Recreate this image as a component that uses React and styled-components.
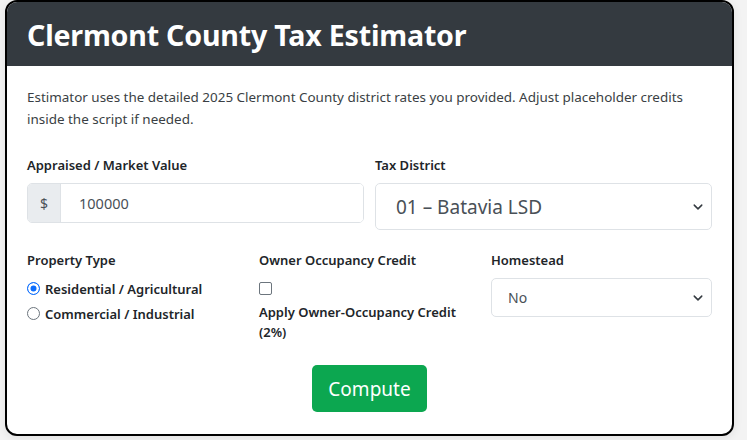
import React from "react";
import styled, { createGlobalStyle } from "styled-components";

const Global = createGlobalStyle`
  html, body { margin: 0; padding: 0; background: #f3f3f3; }
  body { font-family: "Noto Sans", "Open Sans", sans-serif; color: #212529; }
  * { box-sizing: border-box; }
`;

const Page = styled.div`
  padding: 0 12px 4px 5px;
  width: 747px;
  height: 440px;
`;

const Card = styled.div`
  width: 729px;
  border: 2px solid #000;
  border-radius: 12px;
  overflow: hidden;
  background: #fff;
  box-shadow: 0 2px 10px rgba(0, 0, 0, 0.08);
`;

const Header = styled.div`
  background: #343a40;
  height: 64px;
  display: flex;
  align-items: center;
  padding: 0 20px;
`;

const Title = styled.h1`
  margin: 0;
  color: #fff;
  font-size: 28.6px;
  font-weight: 700;
  letter-spacing: -0.2px;
`;

const Body = styled.div`
  padding: 20px 20px 22px 20px;
`;

const Intro = styled.p`
  margin: 0 0 25px;
  font-size: 13.45px;
  line-height: 22px;
  color: #3a3f44;
`;

const Row = styled.div`
  display: grid;
  grid-template-columns: repeat(${(p) => p.$cols}, 1fr);
  column-gap: 11px;
  align-items: start;
  margin-bottom: ${(p) => p.$mb || 0}px;
`;

const Field = styled.div`
  display: flex;
  flex-direction: column;
`;

const Label = styled.label`
  font-size: 13px;
  font-weight: 600;
  line-height: 21px;
  margin-bottom: ${(p) => p.$mb ?? 7}px;
  color: #212529;
`;

const InputGroup = styled.div`
  display: flex;
  height: 40px;
  border: 1px solid #dee2e6;
  border-radius: 5px;
  overflow: hidden;
`;

const Addon = styled.span`
  width: 33px;
  background: #e9ecef;
  border-right: 1px solid #dee2e6;
  display: flex;
  align-items: center;
  justify-content: center;
  font-size: 14px;
  color: #495057;
`;

const Input = styled.input`
  flex: 1;
  border: 0;
  outline: none;
  padding: 0 18px;
  font-family: inherit;
  font-size: 14.5px;
  color: #495057;
`;

const SelectBox = styled.div`
  position: relative;
  height: ${(p) => (p.$lg ? 47 : 39)}px;
  border: 1px solid #dee2e6;
  border-radius: 5px;
  display: flex;
  align-items: center;
  padding-left: ${(p) => (p.$lg ? 20 : 16)}px;
  font-size: ${(p) => (p.$lg ? 19 : 14)}px;
  color: #495057;
`;

const Chevron = styled.svg`
  position: absolute;
  right: 8px;
  top: 50%;
  margin-top: -4px;
`;

const Select = ({ lg, children }) => (
  <SelectBox $lg={lg}>
    {children}
    <Chevron width="10" height="8" viewBox="0 0 16 12">
      <path d="M2 3l6 6 6-6" fill="none" stroke="#343a40" strokeWidth="2.4" strokeLinecap="round" strokeLinejoin="round" />
    </Chevron>
  </SelectBox>
);

const OptionLine = styled.div`
  display: flex;
  align-items: center;
  gap: 5px;
  height: 25px;
  font-size: 13px;
  font-weight: 600;
`;

const Radio = styled.span`
  width: 13px;
  height: 13px;
  border-radius: 50%;
  border: 1px solid ${(p) => (p.$on ? "#0d6efd" : "#6c757d")};
  background: ${(p) => (p.$on ? "#0d6efd" : "#fff")};
  box-shadow: ${(p) => (p.$on ? "inset 0 0 0 2.5px #fff" : "none")};
  flex-shrink: 0;
`;

const CheckBox = styled.span`
  display: block;
  width: 13px;
  height: 13px;
  border: 1px solid #6c757d;
  border-radius: 2px;
  margin: 4px 0 7px;
`;

const CheckText = styled.div`
  font-size: 13px;
  font-weight: 600;
  line-height: 20px;
`;

const ButtonRow = styled.div`
  display: flex;
  justify-content: center;
  margin-top: 23px;
`;

const Button = styled.button`
  width: 115px;
  height: 47px;
  border: 0;
  border-radius: 5px;
  background: #0ca750;
  color: #fff;
  font-family: inherit;
  font-size: 19px;
`;

export default function App() {
  return (
    <Page>
      <Global />
      <Card>
        <Header>
          <Title>Clermont County Tax Estimator</Title>
        </Header>
        <Body>
          <Intro>
            Estimator uses the detailed 2025 Clermont County district rates you provided. Adjust placeholder credits
            inside the script if needed.
          </Intro>
          <Row $cols={2} $mb={20}>
            <Field>
              <Label>Appraised / Market Value</Label>
              <InputGroup>
                <Addon>$</Addon>
                <Input defaultValue="100000" />
              </InputGroup>
            </Field>
            <Field>
              <Label>Tax District</Label>
              <Select lg>01 – Batavia LSD</Select>
            </Field>
          </Row>
          <Row $cols={3}>
            <Field>
              <Label $mb={5}>Property Type</Label>
              <OptionLine>
                <Radio $on />
                Residential / Agricultural
              </OptionLine>
              <OptionLine>
                <Radio />
                Commercial / Industrial
              </OptionLine>
            </Field>
            <Field>
              <Label $mb={7}>Owner Occupancy Credit</Label>
              <CheckBox />
              <CheckText>Apply Owner-Occupancy Credit (2%)</CheckText>
            </Field>
            <Field>
              <Label>Homestead</Label>
              <Select>No</Select>
            </Field>
          </Row>
          <ButtonRow>
            <Button>Compute</Button>
          </ButtonRow>
        </Body>
      </Card>
    </Page>
  );
}
